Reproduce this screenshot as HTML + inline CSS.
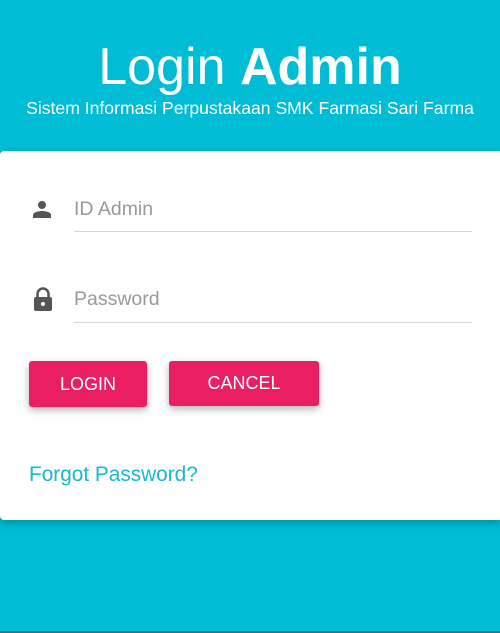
<!DOCTYPE html>
<html><head><style>
*{margin:0;padding:0;box-sizing:border-box}
body{width:500px;height:633px;background:#00bcd4;font-family:"Liberation Sans",sans-serif;position:relative;overflow:hidden}
.h1{position:absolute;top:35px;left:0;width:500px;text-align:center;color:#fff;font-size:52px;line-height:64px}
.sub{position:absolute;top:98px;left:0;width:500px;text-align:center;color:#fff;font-size:17.6px}
.card{position:absolute;top:151px;left:0;width:500px;height:369px;background:#fff;border-radius:4px 0 0 4px;box-shadow:0 3px 8px rgba(0,0,0,.25)}
.f{position:absolute;left:74px;width:398px;border-bottom:1px solid #d6d6d6;color:#999;font-size:19.5px;padding-top:3px}
.btn{position:absolute;background:#e91e63;color:#fff;font-size:18px;text-align:center;border-radius:3px;box-shadow:0 3px 8px rgba(0,0,0,.3)}
.line{position:absolute;bottom:0;left:0;width:500px;height:2px;background:#4a6a78}
</style></head><body>
<div class="h1">Login <b>Admin</b></div>
<div class="sub">Sistem Informasi Perpustakaan SMK Farmasi Sari Farma</div>
<div class="card">
<svg style="position:absolute;left:32px;top:48px" width="20" height="20" viewBox="0 0 20 20"><circle cx="10" cy="6" r="4" fill="#555"/><path d="M1 19v-3c0-3 6-4 9-4s9 1 9 4v3z" fill="#555"/></svg>
<div class="f" style="top:44px;height:37px">ID Admin</div>
<svg style="position:absolute;left:33px;top:136px" width="20" height="25" viewBox="0 0 20 25"><path d="M4.5 10V7a5.5 5.5 0 0 1 11 0v3" stroke="#555" stroke-width="2.5" fill="none"/><rect x="1" y="10" width="18" height="14" rx="2" fill="#555"/><circle cx="10" cy="17" r="2" fill="#fff"/></svg>
<div class="f" style="top:134px;height:38px">Password</div>
<div class="btn" style="left:29px;top:210px;width:118px;height:46px;line-height:46px">LOGIN</div>
<div class="btn" style="left:169px;top:210px;width:150px;height:45px;line-height:45px">CANCEL</div>
<div style="position:absolute;left:29px;top:312px;color:#1ab6d2;font-size:20.8px">Forgot Password?</div>
</div>
<div class="line"></div>
</body></html>
